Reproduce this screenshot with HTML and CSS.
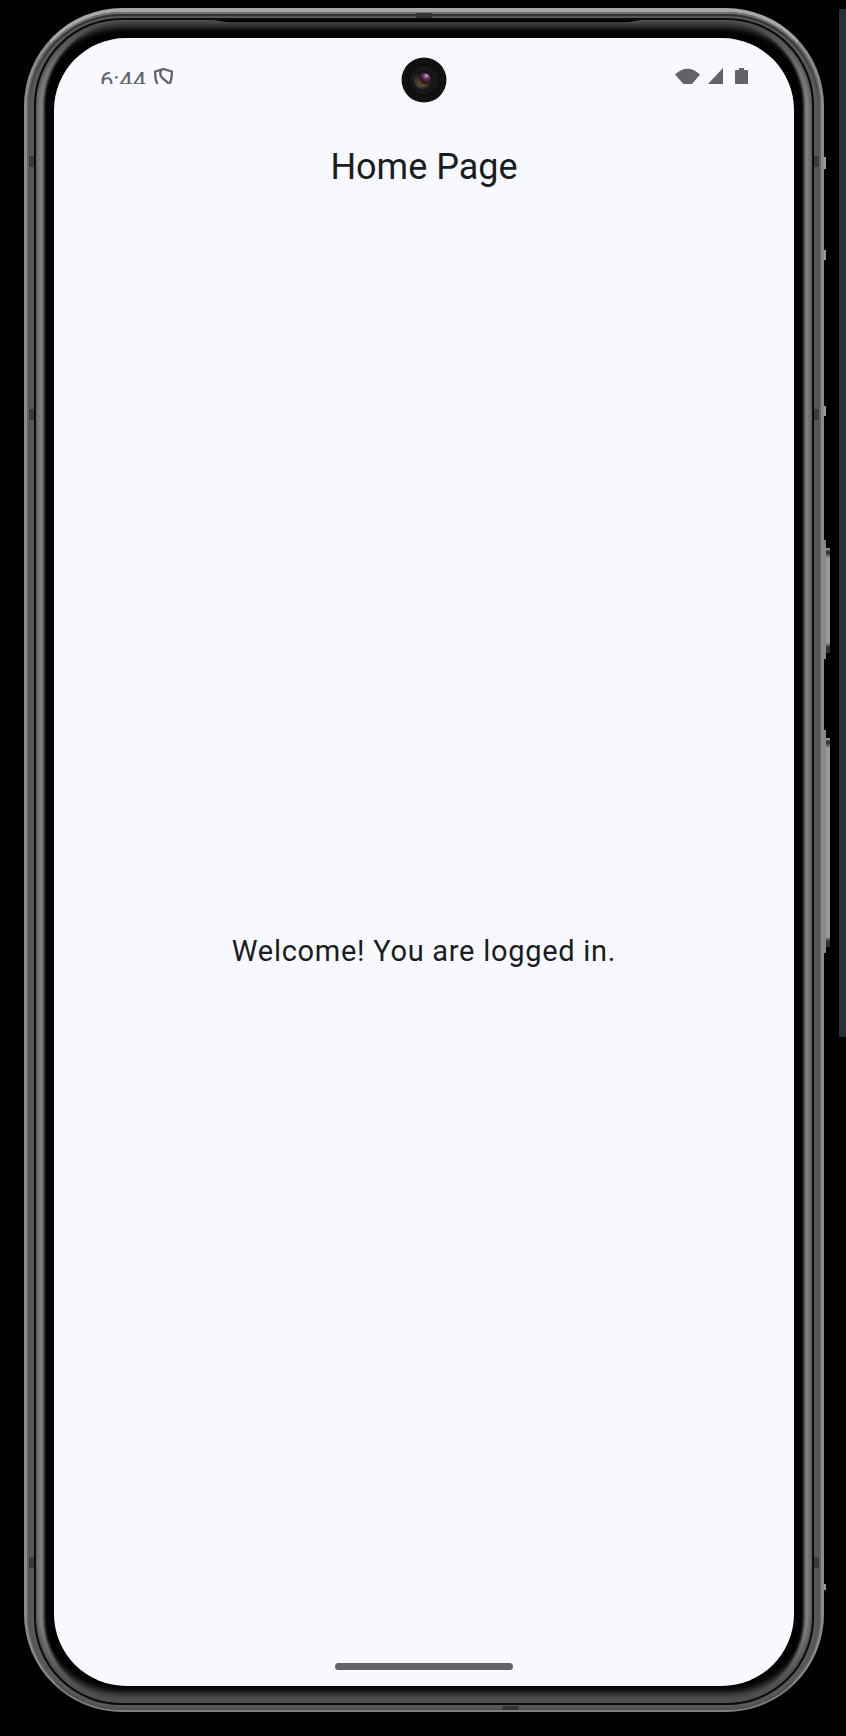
FILE: index.html
```html
<!DOCTYPE html>
<html lang="en">
<head>
<meta charset="utf-8">
<meta name="viewport" content="width=device-width, initial-scale=1">
<title>Home Page</title>
<link rel="stylesheet" href="styles.css">
</head>
<body>
<div class="stage">
  <div class="side-panel"></div>
  <div class="phone">
    <span class="key key-power"></span>
    <span class="key key-volume"></span>
    <span class="nub nub-a"></span>
    <span class="nub nub-b"></span>
    <span class="nub nub-c"></span>
    <span class="nub nub-d"></span>
    <span class="seam seam-left seam-upper"></span>
    <span class="seam seam-left seam-middle"></span>
    <span class="seam seam-left seam-lower"></span>
    <span class="seam seam-right seam-upper"></span>
    <span class="seam seam-right seam-middle"></span>
    <span class="seam seam-right seam-lower"></span>
    <span class="seam-top"></span>
    <span class="seam-bottom"></span>
    <div class="rim">
      <div class="groove">
        <div class="bezel">
          <svg class="speaker" viewBox="0 0 430 4" preserveAspectRatio="none" aria-hidden="true"><path d="M0 0H430L416 3H14Z" fill="#000"/></svg>
          <div class="screen">
            <div class="status">
              <div class="status-side">
                <span class="clock">6:44</span>
                <svg class="shield" width="19" height="16" viewBox="0 0 19 16" aria-hidden="true"><path d="M3.500 16Q1 12 1.200 3.500L9.500 1L17.800 3.500Q18 12 15.500 16M7 2C4.500 9 9 10 14.500 15.500" fill="none" stroke="#626366" stroke-width="2.300"/></svg>
              </div>
              <svg class="camera" width="46" height="46" viewBox="0 0 46 46" aria-hidden="true">
                <defs>
                  <radialGradient id="lens" cx=".68" cy=".2" r=".8"><stop offset="0" stop-color="#e5a0d8"/><stop offset=".25" stop-color="#6e3d62"/><stop offset=".6" stop-color="#2a1520"/><stop offset="1" stop-color="#6b5224"/></radialGradient>
                  <linearGradient id="ring" x1="0" y1="1" x2="1" y2="0"><stop offset="0" stop-color="#555"/><stop offset=".5" stop-color="#1b1b1b"/><stop offset="1" stop-color="#111"/></linearGradient>
                </defs>
                <circle cx="23" cy="23" r="22.500" fill="#101010"/>
                <circle cx="23" cy="23" r="15" fill="#181818" stroke="#080808"/>
                <circle cx="22" cy="23" r="9" fill="url(#ring)"/>
                <circle cx="23" cy="23" r="7" fill="url(#lens)"/>
              </svg>
              <div class="status-side status-end">
                <svg width="25" height="16" viewBox="0 0 25 16" aria-hidden="true"><path d="M0 6.500Q12.500-5 25 6.500L17 16H8.500Z" fill="#626366"/></svg>
                <svg width="15" height="16" viewBox="0 0 15 16" aria-hidden="true"><path d="M15 0V16H0Z" fill="#626366"/></svg>
                <svg width="13" height="16" viewBox="0 0 13 16" aria-hidden="true"><path d="M4 0H9V2H12Q13 2 13 3V16H0V3Q0 2 1 2H4Z" fill="#626366"/></svg>
              </div>
            </div>
            <h1 class="title">Home Page</h1>
            <main class="content"><p class="message">Welcome! You are logged in.</p></main>
            <div class="home-bar"></div>
          </div>
        </div>
      </div>
    </div>
  </div>
</div>
</body>
</html>
```
FILE: styles.css
```css
* { box-sizing: border-box; }

body {
  margin: 0;
  background: #000;
  color: #1a1c20;
  font-family: Roboto, "Noto Sans", sans-serif;
}

.stage {
  position: relative;
  display: flex;
  min-height: 100vh;
  padding: 8px 22px 24px 24px;
}

.side-panel {
  position: absolute;
  top: 9px;
  right: 0;
  width: 7px;
  height: 1028px;
  background: #263238;
}

.phone,
.rim,
.groove,
.bezel,
.screen {
  display: flex;
  flex: 1;
  min-width: 0;
}

.phone {
  position: relative;
  border-style: solid;
  border-width: 4px 3px 2px;
  border-color: #a8a8a8 #8c8c8c #808080;
  border-radius: 98px;
  background: #555;
}

.rim {
  border-style: solid;
  border-width: 2px;
  border-color: #707070 #606060 #505050;
  border-radius: 94px;
}

.groove {
  padding: 4px 5px 3px;
  border-radius: 92px;
  background: #585858;
  box-shadow: inset 0 2px 1px #303030;
}

.bezel {
  position: relative;
  padding: 18px 18px 17px;
  border: 2px solid #0c0c0c;
  border-radius: 87px;
  background: #000;
  box-shadow: inset 0 7px 7px #4c4c4c, inset 0 -10px 7px #505050, inset 8px 0 3px #8c8c8c, inset -8px 0 3px #8c8c8c;
}

.speaker {
  position: absolute;
  top: 0;
  left: 23%;
  width: 55%;
  height: 3px;
}

.screen {
  flex-direction: column;
  align-items: center;
  border-radius: 72px;
  background: #f8f9ff;
}

.status {
  display: flex;
  align-items: flex-start;
  width: 100%;
  height: 64px;
  padding: 19px 46px 0;
}

.status-side {
  display: flex;
  flex: 1;
  align-items: flex-start;
  height: 27px;
  padding-top: 11px;
  gap: 8px;
  overflow: hidden;
}

.status-end {
  justify-content: flex-end;
}

.status-end svg:last-child { margin-left: 4px; }

.clock {
  color: #626366;
  font-size: 24px;
  line-height: 26px;
}

.title {
  margin: 41px 0 0;
  font-size: 36px;
  font-weight: 400;
  line-height: 48px;
}

.content {
  display: flex;
  flex: 1;
  align-items: center;
  padding-top: 48px;
}

.message {
  margin: 0;
  font-size: 29px;
  line-height: 40px;
  letter-spacing: 0.025em;
}

.home-bar {
  width: 178px;
  height: 7px;
  margin-bottom: 16px;
  border-radius: 4px;
  background: #626366;
}

.key {
  position: absolute;
  left: calc(100% + 3px);
  width: 6px;
  border-left: 1px solid #777;
  background: linear-gradient(#888 0 2px, #333 3px 5px, #999 10px calc(100% - 10px), #333 calc(100% - 6px));
}

.key::before {
  content: "";
  position: absolute;
  top: -8px;
  bottom: -6px;
  left: -1px;
  width: 2px;
  background: #888;
}

.key-power { top: 536px; height: 105px; }
.key-volume { top: 726px; height: 209px; }

.nub {
  position: absolute;
  left: calc(100% + 3px);
  width: 2px;
  height: 12px;
  background: #999;
}

.nub-a { top: 145px; }
.nub-b { top: 238px; height: 10px; }
.nub-c { top: 394px; height: 10px; }
.nub-d { bottom: 120px; height: 6px; }

.seam {
  position: absolute;
  z-index: 1;
  width: 5px;
  height: 11px;
  background: #3a3a3a;
}

.seam-left { left: 2px; }
.seam-right { right: 2px; }
.seam-upper { top: 144px; }
.seam-middle { top: 397px; }
.seam-lower { bottom: 142px; }

.seam-top,
.seam-bottom {
  position: absolute;
  z-index: 1;
  width: 16px;
  background: #333;
}

.seam-top { top: 1px; left: 49%; height: 5px; }
.seam-bottom { bottom: 0; left: 60%; height: 4px; }
```
